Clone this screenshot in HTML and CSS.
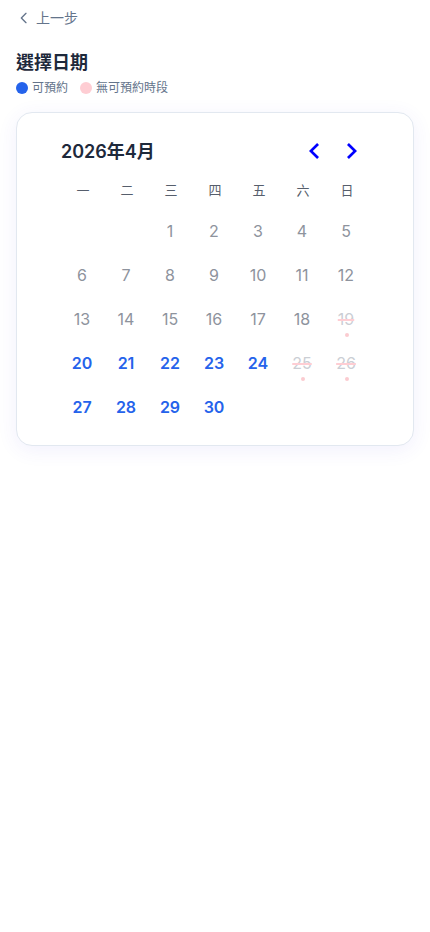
FILE: index.html
```html
<!DOCTYPE html>
<html lang="zh-Hant">
    <head>
        <meta charset="UTF-8" />
        <meta name="viewport" content="width=device-width, initial-scale=1.0" />
        <title>選擇日期</title>
        <link rel="stylesheet" href="styles.css">
    </head>
    <body>
        <main class="page">
            <button type="button" class="back-button">
                <svg class="back-icon" viewBox="0 0 24 24" aria-hidden="true">
                    <path d="M15 19l-7-7 7-7" />
                </svg>
                上一步
            </button>

            <h1 class="title">選擇日期</h1>

            <div class="legend">
                <span class="legend-item"><span class="dot dot-open"></span>可預約</span>
                <span class="legend-item"><span class="dot dot-full"></span>無可預約時段</span>
            </div>

            <section class="card">
                <div class="calendar">
                    <div class="calendar-header">
                        <h2 class="month">2026年4月</h2>
                        <nav class="month-nav">
                            <button type="button" class="nav-button" aria-label="上個月">
                                <svg width="24" height="24" viewBox="0 0 24 24">
                                    <polygon points="16 18.112 9.812 12 16 5.877 14.089 4 6 12 14.089 20" />
                                </svg>
                            </button>
                            <button type="button" class="nav-button" aria-label="下個月">
                                <svg width="24" height="24" viewBox="0 0 24 24">
                                    <polygon points="8 18.112 14.189 12 8 5.877 9.911 4 18 12 9.911 20" />
                                </svg>
                            </button>
                        </nav>
                    </div>

                    <table class="days">
                        <thead>
                            <tr>
                                <th>一</th>
                                <th>二</th>
                                <th>三</th>
                                <th>四</th>
                                <th>五</th>
                                <th>六</th>
                                <th>日</th>
                            </tr>
                        </thead>
                        <tbody>
                            <tr>
                                <td></td>
                                <td></td>
                                <td><button class="day" disabled>1</button></td>
                                <td><button class="day" disabled>2</button></td>
                                <td><button class="day" disabled>3</button></td>
                                <td><button class="day" disabled>4</button></td>
                                <td><button class="day" disabled>5</button></td>
                            </tr>
                            <tr>
                                <td><button class="day" disabled>6</button></td>
                                <td><button class="day" disabled>7</button></td>
                                <td><button class="day" disabled>8</button></td>
                                <td><button class="day" disabled>9</button></td>
                                <td><button class="day" disabled>10</button></td>
                                <td><button class="day" disabled>11</button></td>
                                <td><button class="day" disabled>12</button></td>
                            </tr>
                            <tr>
                                <td><button class="day" disabled>13</button></td>
                                <td><button class="day" disabled>14</button></td>
                                <td><button class="day" disabled>15</button></td>
                                <td><button class="day" disabled>16</button></td>
                                <td><button class="day" disabled>17</button></td>
                                <td><button class="day" disabled>18</button></td>
                                <td class="full"><button class="day" disabled>19</button></td>
                            </tr>
                            <tr>
                                <td><button class="day open">20</button></td>
                                <td><button class="day open">21</button></td>
                                <td><button class="day open">22</button></td>
                                <td><button class="day open">23</button></td>
                                <td><button class="day open">24</button></td>
                                <td class="full"><button class="day" disabled>25</button></td>
                                <td class="full"><button class="day" disabled>26</button></td>
                            </tr>
                            <tr>
                                <td><button class="day open">27</button></td>
                                <td><button class="day open">28</button></td>
                                <td><button class="day open">29</button></td>
                                <td><button class="day open">30</button></td>
                                <td></td>
                                <td></td>
                                <td></td>
                            </tr>
                        </tbody>
                    </table>
                </div>
            </section>
        </main>
    </body>
</html>
```
FILE: styles.css
```css
* {
    box-sizing: border-box;
}

body {
    margin: 0;
    background: #fff;
    color: #1e293b;
    font-family: Inter, "Noto Sans CJK TC", sans-serif;
    font-size: 16px;
    line-height: 24px;
    -webkit-font-smoothing: antialiased;
}

button {
    padding: 0;
    border: none;
    background: none;
    color: inherit;
    font: inherit;
    cursor: pointer;
}

.page {
    min-height: 100vh;
    padding: 8px 16px;
}

.back-button {
    display: flex;
    align-items: center;
    gap: 4px;
    color: #64748b;
    font-size: 14px;
    line-height: 20px;
}

.back-icon {
    width: 16px;
    height: 16px;
    fill: none;
    stroke: currentColor;
    stroke-width: 2;
    stroke-linecap: round;
    stroke-linejoin: round;
}

.title {
    margin: 20px 0 1px;
    font-size: 18px;
    font-weight: 600;
    line-height: 30px;
}

.legend {
    display: flex;
    gap: 12px;
    margin-bottom: 15px;
    color: #64748b;
    font-size: 12px;
    line-height: 18px;
}

.legend-item {
    display: flex;
    align-items: center;
    gap: 4px;
}

.dot {
    width: 12px;
    height: 12px;
    border-radius: 50%;
}

.dot-open {
    background: #2563eb;
}

.dot-full {
    background: #fecdd3;
}

.card {
    display: flex;
    justify-content: center;
    padding: 16px;
    border: 1px solid #e2e8f0;
    border-radius: 16px;
    background: #fff;
    box-shadow: 0 4px 20px rgba(79, 70, 229, 0.08);
}

.calendar-header {
    display: flex;
    align-items: center;
    justify-content: space-between;
    height: 44px;
}

.month {
    margin: 0;
    padding-top: 2px;
    font-size: 18px;
    font-weight: 600;
}

.month-nav {
    display: flex;
}

.nav-button {
    display: flex;
    align-items: center;
    justify-content: center;
    width: 36px;
    height: 44px;
    fill: #0000ff;
}

.days {
    border-collapse: collapse;
}

.days th {
    width: 44px;
    height: 36px;
    padding: 0 0 2px;
    color: #565e6c;
    font-size: 13px;
    font-weight: 400;
    line-height: 20px;
}

.days td {
    position: relative;
    width: 44px;
    height: 44px;
    padding: 0;
}

.day {
    display: block;
    width: 42px;
    height: 42px;
    border-radius: 50%;
}

.day:disabled {
    color: #8e939d;
    cursor: default;
}

.day.open {
    color: #2563eb;
    font-weight: 600;
}

.full .day {
    color: #cbced4;
    text-decoration: line-through 2px #fecdd3;
}

/* marker under a fully booked day */
.full::after {
    content: "";
    position: absolute;
    bottom: 4px;
    left: 50%;
    width: 4px;
    height: 4px;
    border-radius: 50%;
    background: #fbcbd0;
    transform: translateX(-50%);
}
```
